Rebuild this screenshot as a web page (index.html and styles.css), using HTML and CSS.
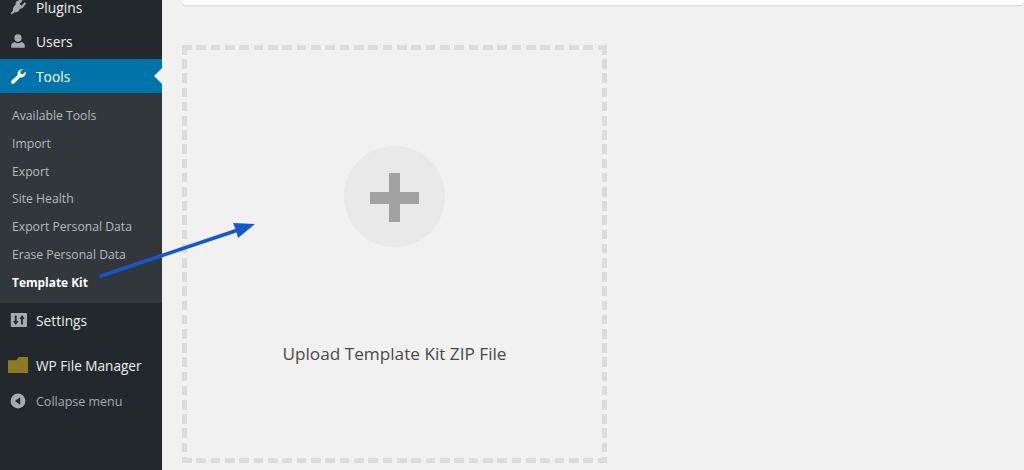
FILE: index.html
```html
<!DOCTYPE html>
<html lang="en">
<head>
<meta charset="utf-8">
<title>Template Kit</title>
<link rel="stylesheet" href="styles.css">
</head>
<body>
<div class="app">
  <aside class="sidebar">
    <nav class="menu">
      <a class="item"><svg class="ico" viewBox="0 0 20 20"><path d="M13.100 1.200l2 1.600-3.300 4 2.200 1.800 3.300-4 1.700 1.500-3.100 4.100c-.8 1-2 1.500-3.100 1.400l-2 2.700c-1 1.300-2.900 2.100-4.600 1.600l-3.300 2.300-1-1.200 2.600-3c-.5-1.400-.2-3 .8-4.200l2.100-2.600c-.3-1.100 0-2.300.7-3.200z"/></svg><span>Plugins</span></a>
      <a class="item"><svg class="ico" viewBox="0 0 20 20"><path d="M10 2.500a4 4.300 0 0 1 4 4.300c0 2.200-1.500 4.200-4 4.200S6 9 6 6.800a4 4.300 0 0 1 4-4.300zM6.300 11.200c1 .9 2.300 1.300 3.700 1.300s2.700-.4 3.700-1.300c2 .5 3.800 1.700 3.800 3.500v2.800h-15v-2.800c0-1.800 1.800-3 3.800-3.500z"/></svg><span>Users</span></a>
      <a class="item current"><svg class="ico" viewBox="0 0 20 20"><path d="M15.500 2.200l-3 3 .6 2.300 2.300.6 3-3c.5 2.300-.1 4-1.400 5.200-1.300 1.200-3 1.500-4.600 1L6 18c-1 1-2.500 1-3.300.1-.9-.9-.8-2.300.2-3.200l6.700-6c-.4-1.700 0-3.300 1.200-4.600 1.200-1.200 2.700-2.500 4.700-2.100z"/></svg><span>Tools</span></a>
      <ul class="submenu">
        <li class="subitem">Available Tools</li>
        <li class="subitem">Import</li>
        <li class="subitem">Export</li>
        <li class="subitem">Site Health</li>
        <li class="subitem">Export Personal Data</li>
        <li class="subitem">Erase Personal Data</li>
        <li class="subitem active">Template Kit</li>
      </ul>
      <a class="item settings"><svg class="ico" viewBox="0 0 20 20"><path fill-rule="evenodd" d="M3 2.200h16a1 1 0 0 1 1 1v13.600a1 1 0 0 1-1 1H3a1 1 0 0 1-1-1V3.200a1 1 0 0 1 1-1zM6.500 5v6H4.500L7.500 15.500 10.500 11H8.500V5zM15.500 15V9h2L14.500 4.500 11.500 9h2v6z"/></svg><span>Settings</span></a>
      <a class="item files"><svg class="folder" viewBox="0 0 20 16"><path d="M0 3.200h8.500L10.500 0H20V16H0z"/></svg><span>WP File Manager</span></a>
      <a class="item collapse"><svg class="ico" viewBox="0 0 20 20"><path fill-rule="evenodd" d="M10 1.800a8.200 8.200 0 1 1 0 16.400 8.200 8.200 0 0 1 0-16.400zM12.500 5.800L6.500 10l6 4.200z"/></svg><span>Collapse menu</span></a>
    </nav>
  </aside>
  <main class="content">
    <div class="panel"></div>
    <section class="upload">
      <div class="circle"><svg class="plus" viewBox="0 0 49 49"><path d="M19 0h11v19h19v12H30v18H19V31H0V19h19z"/></svg></div>
      <p class="label">Upload Template Kit ZIP File</p>
    </section>
  </main>
</div>
<svg class="arrow" viewBox="0 0 1024 470"><path class="shaft" d="M101 276L238 230"/><path class="head" d="M255 224L233 223 236 230 238 238z"/></svg>
</body>
</html>
```
FILE: styles.css
```css
* { box-sizing: border-box; }
html, body { margin: 0; height: 470px; overflow: hidden; background: #f1f1f1; }
body { font-family: "Open Sans", "Noto Sans", sans-serif; position: relative; }
.app { display: flex; height: 470px; }
.sidebar { width: 162px; flex: none; background: #23282d; overflow: hidden; }
.menu { display: flex; flex-direction: column; margin-top: -10px; }
.item { display: flex; align-items: center; height: 34px; padding-left: 9px; gap: 9px; color: #eceeef; font-size: 13.800px; position: relative; }
.ico { width: 18px; height: 18px; fill: #a7aaad; flex: none; }
.current { background: #0073aa; color: #fff; margin-top: 1px; }
.current .ico { fill: #fff; }
.current::after { content: ""; position: absolute; right: 0; top: 9px; border: 8px solid transparent; border-left: 0; border-right-color: #f1f1f1; }
.submenu { list-style: none; margin: 0; padding: 9px 0 6px; height: 210px; background: #32373c; display: flex; flex-direction: column; }
.subitem { height: 27.800px; line-height: 27.800px; padding-left: 12px; font-size: 12.200px; color: #b4b9be; white-space: nowrap; }
.active { color: #fff; font-weight: 700; font-size: 11.900px; }
.files { margin-top: 11px; gap: 8px; padding-left: 8px; font-size: 13.600px; }
.folder { width: 20px; height: 16px; fill: #8f7a23; flex: none; }
.collapse { margin-top: 2px; color: #a7aaad; font-size: 12.500px; }
.content { flex: 1; padding-left: 20px; display: flex; flex-direction: column; }
.panel { height: 5px; margin-bottom: 40px; background: #fff; border-radius: 0 0 4px 4px; box-shadow: 0 1px 1px rgba(0,0,0,.12); }
.upload {
  width: 425px; height: 418px; display: flex; flex-direction: column; align-items: center;
  padding-top: 101px;
  background-image:
    repeating-linear-gradient(90deg, #dcdcdc 0 9.700px, transparent 9.700px 14.330px),
    repeating-linear-gradient(90deg, #dcdcdc 0 9.700px, transparent 9.700px 14.330px),
    repeating-linear-gradient(180deg, #dcdcdc 0 9.700px, transparent 9.700px 14.200px),
    repeating-linear-gradient(180deg, #dcdcdc 0 9.700px, transparent 9.700px 14.200px);
  background-size: 100% 5px, 100% 5px, 5px 100%, 5px 100%;
  background-position: 0 0, 0 100%, 0 0, 100% 0;
  background-repeat: no-repeat;
}
.circle { width: 101px; height: 101px; border-radius: 50%; background: #e9e9e9; display: flex; align-items: center; justify-content: center; }
.plus { width: 49px; height: 49px; fill: #a2a2a2; margin-top: 2px; }
.label { margin: 95px 0 0; font-size: 17.200px; line-height: 24px; color: #484848; white-space: nowrap; }
.arrow { position: absolute; left: 0; top: 0; width: 1024px; height: 470px; pointer-events: none; }
.shaft { stroke: #1258cf; stroke-width: 3.500; stroke-linecap: round; fill: none; }
.head { fill: #1258cf; }
```
